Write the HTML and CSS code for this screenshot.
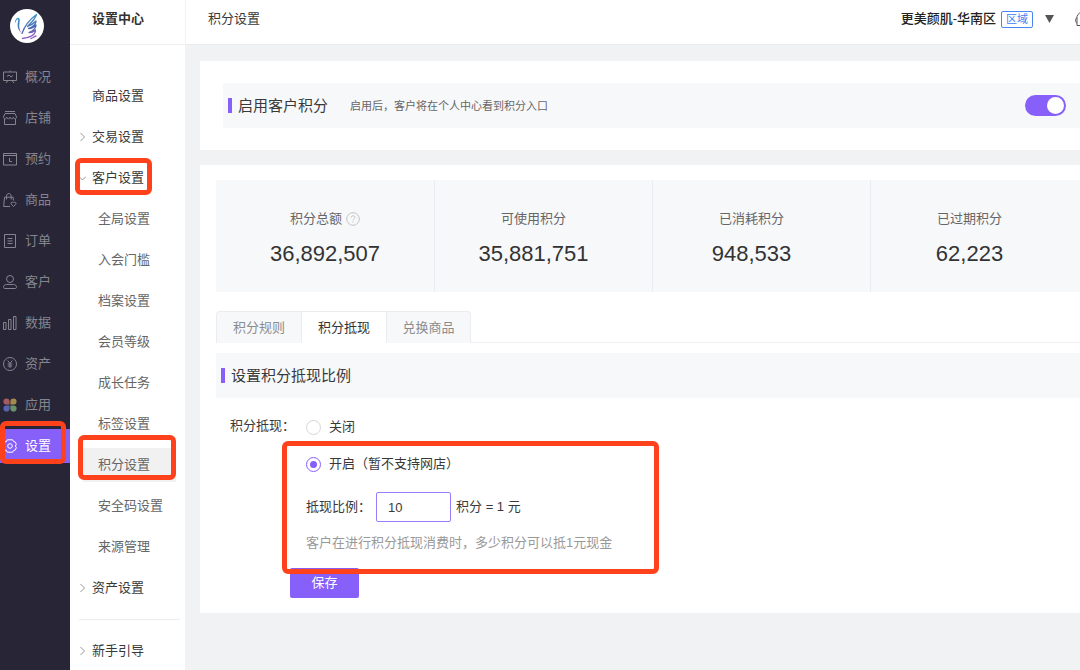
FILE: index.html
```
<!DOCTYPE html>
<html lang="zh-CN">
<head>
<meta charset="utf-8">
<title>积分设置</title>
<link rel="stylesheet" href="styles.css">
</head>
<body>
<div class="app">
  <nav class="rail" aria-label="主导航">
    <svg class="logo" viewBox="0 0 34 34" aria-hidden="true">
      <defs>
        <linearGradient id="wing" gradientUnits="userSpaceOnUse" x1="14" y1="6" x2="20" y2="30">
          <stop offset="0" stop-color="#3aa0d2"/><stop offset="0.55" stop-color="#4a69b0"/><stop offset="1" stop-color="#a05fc4"/>
        </linearGradient>
      </defs>
      <circle cx="17" cy="17" r="17" fill="#fff"/>
      <path fill="url(#wing)" d="M4.800 14.500C5 10.500 6.500 8.300 8.300 8.700c2.700.8 1 4.800.9 8.300 0 3 1 5 2.300 7C9 22 7.500 19 7.600 16c.1-3 1.200-5.500.2-5.800-1-.3-1.800 2-3 4.300z"/>
      <path fill="none" stroke="url(#wing)" stroke-linecap="round" stroke-linejoin="round" stroke-width="1.300" d="M12 24.500c2-6 7-13.500 14.500-19-1.500 5-5.500 8.500-9 12 3.500-1 6-3 8.500-5.500 0 4-3.500 6-7.500 7.500 3 .5 5-1 7.500-3.500 0 3.500-3.500 6-7 7.500 2.500.2 4.500-.6 6.500-2.500 0 4.500-5.500 7.500-13 8.500M21 29.500c2-.5 3-2 5-2.500"/>
    </svg>
    <a class="rail-item" href="#"><svg class="icon" viewBox="0 0 14 14"><path d="M.5 2h13v8.500H.5zM7 .5V2M5 10.500l-2 2.500M9 10.500l2 2.500M4 6.500l2-1.500 2 2 2-1.500"/></svg>概况</a>
    <a class="rail-item" href="#"><svg class="icon" viewBox="0 0 14 14"><path d="M2 .5h10M2 2.500h10l1.500 3.500c0 2.400-3.200 2.400-3.200 0 0 2.400-3.300 2.400-3.300 0 0 2.400-3.300 2.400-3.300 0 0 2.400-3.200 2.400-3.200 0zM1.500 8v5.500h11V8"/></svg>店铺</a>
    <a class="rail-item" href="#"><svg class="icon" viewBox="0 0 14 14"><path d="M.5 1.500h13v11.500H.5zM.5 3.500h13M6.500 6v3.500h2.500"/></svg>预约</a>
    <a class="rail-item" href="#"><svg class="icon" viewBox="0 0 14 14"><path d="M7 13.500H.7l.8-9.300h8.700l.3 3.300M3.500 6.500V3.300c0-3.700 4.700-3.700 4.700 0v3.200M10.500 13.500L8.200 11.200c-1-1.800 1.300-2.800 2.300-1.200 1-1.600 3.300-.6 2.300 1.200z"/></svg>商品</a>
    <a class="rail-item" href="#"><svg class="icon" viewBox="0 0 14 14"><path d="M1.500.5h11v13h-11zM4.500 4.500h5M4.500 7h5M4.500 9.500h5"/></svg>订单</a>
    <a class="rail-item" href="#"><svg class="icon" viewBox="0 0 14 14"><circle cx="7" cy="4" r="3.500"/><path d="M3.500 9.500h7c2 0 3 1.200 3 2.800 0 .8-.5 1.200-1.500 1.200H2c-1 0-1.500-.4-1.500-1.200 0-1.600 1-2.800 3-2.800z"/></svg>客户</a>
    <a class="rail-item" href="#"><svg class="icon" viewBox="0 0 14 14"><path d="M.5 6.500H3v7H.5zM5.500 3.500H8v10H5.500zM10.500.5H13v13h-2.500z"/></svg>数据</a>
    <a class="rail-item" href="#"><svg class="icon" viewBox="0 0 14 14"><circle cx="7" cy="7" r="6.500"/><path d="M4.700 3.500L7 6.500l2.300-3M7 6.500V11M4.700 7h4.600M4.700 9h4.600"/></svg>资产</a>
    <a class="rail-item" href="#"><svg class="icon icon-apps" viewBox="0 0 14 14"><path fill="#a55c5e" d="M6.600 6.600H3.500A3.100 3.100 0 1 1 6.600 3.500z"/><path fill="#a58a50" d="M7.400 6.600h3.100a3.100 3.100 0 1 0-3.100-3.100z"/><path fill="#5864ab" d="M6.600 7.400H3.500a3.100 3.100 0 1 0 3.100 3.100z"/><path fill="#6a9368" d="M7.400 7.400h3.100a3.100 3.100 0 1 1-3.100 3.100z"/></svg>应用</a>
    <a class="rail-item rail-active" href="#" aria-current="page"><svg class="icon" viewBox="0 0 14 14"><path d="M4.300.8h5.400l.8 1.700 1.900.6.900 2.300-1 1.600 1 1.600-.9 2.300-1.900.6-.8 1.700H4.300l-.8-1.700-1.900-.6-.9-2.300 1-1.600-1-1.600.9-2.300 1.900-.6z"/><circle cx="7" cy="7" r="2.300"/></svg>设置<span class="mark mark-rail"></span></a>
  </nav>

  <aside class="side">
    <h2 class="side-head">设置中心</h2>
    <nav class="side-list" aria-label="设置菜单">
      <a class="side-item" href="#">商品设置</a>
      <a class="side-item" href="#"><svg class="chev" viewBox="0 0 7 8"><path d="M1.500 0l4 4-4 4"/></svg>交易设置</a>
      <a class="side-item" href="#"><svg class="chev" viewBox="0 0 7 8"><path d="M0 2.500l3.500 3.500L7 2.500"/></svg>客户设置<span class="mark mark-group"></span></a>
      <a class="side-item side-sub" href="#">全局设置</a>
      <a class="side-item side-sub" href="#">入会门槛</a>
      <a class="side-item side-sub" href="#">档案设置</a>
      <a class="side-item side-sub" href="#">会员等级</a>
      <a class="side-item side-sub" href="#">成长任务</a>
      <a class="side-item side-sub" href="#">标签设置</a>
      <a class="side-item side-sub side-active" href="#">积分设置<span class="mark mark-sub"></span></a>
      <a class="side-item side-sub" href="#">安全码设置</a>
      <a class="side-item side-sub" href="#">来源管理</a>
      <a class="side-item" href="#"><svg class="chev" viewBox="0 0 7 8"><path d="M1.500 0l4 4-4 4"/></svg>资产设置</a>
      <hr class="side-rule">
      <a class="side-item" href="#"><svg class="chev" viewBox="0 0 7 8"><path d="M1.500 0l4 4-4 4"/></svg>新手引导</a>
    </nav>
  </aside>

  <div class="page">
    <header class="top">
      <h1 class="top-title">积分设置</h1>
      <div class="shop">
        <span class="shop-name">更美颜肌-华南区</span>
        <span class="badge">区域</span>
        <svg class="caret" viewBox="0 0 9 8" aria-hidden="true"><path d="M0 0h9L4.500 8z"/></svg>
        <svg class="service" viewBox="0 0 16 16" aria-hidden="true"><path d="M2 14.500V5.500C3 2.500 5.500 1 8 1s5 1.500 6 4.500v9M2 6.500C0 8 0 11 2 12M2 14.500h3M5 7h2M9 7h2"/></svg>
      </div>
    </header>

    <main class="content">
      <section class="card card-switch">
        <div class="bar">
          <h3 class="bar-title">启用客户积分</h3>
          <label class="bar-hint" for="enable">启用后，客户将在个人中心看到积分入口</label>
          <input class="switch" type="checkbox" role="switch" id="enable" checked>
        </div>
      </section>

      <section class="card card-main">
        <dl class="stats">
          <div class="stat"><dt>积分总额<svg class="help" viewBox="0 0 14 14" aria-hidden="true"><circle cx="7" cy="7" r="6.300"/><path d="M5.200 5.600c0-2.500 3.700-2.300 3.700-.2 0 1.400-1.900 1.500-1.900 3M7 9.500v1"/></svg></dt><dd>36,892,507</dd></div>
          <div class="stat"><dt>可使用积分</dt><dd>35,881,751</dd></div>
          <div class="stat"><dt>已消耗积分</dt><dd>948,533</dd></div>
          <div class="stat"><dt>已过期积分</dt><dd>62,223</dd></div>
        </dl>

        <div class="tabs" role="tablist">
          <button class="tab" type="button" role="tab" aria-selected="false">积分规则</button>
          <button class="tab tab-on" type="button" role="tab" aria-selected="true">积分抵现</button>
          <button class="tab" type="button" role="tab" aria-selected="false">兑换商品</button>
        </div>

        <div class="bar"><h3 class="bar-title">设置积分抵现比例</h3></div>

        <form class="form">
          <div class="field">
            <span class="field-label" id="mode">积分抵现：</span>
            <div class="field-body" role="radiogroup" aria-labelledby="mode">
              <label class="choice"><input class="radio" type="radio" name="mode">关闭</label>
              <div class="enabled">
                <label class="choice"><input class="radio" type="radio" name="mode" checked>开启（暂不支持网店）</label>
                <div class="ratio">
                  <label for="ratio">抵现比例：</label>
                  <input class="ratio-input" id="ratio" type="text" value="10">
                  <span>积分 = 1 元</span>
                </div>
                <p class="note">客户在进行积分抵现消费时，多少积分可以抵1元现金</p>
                <span class="mark mark-form"></span>
              </div>
            </div>
          </div>
          <button class="save" type="button">保存</button>
        </form>
      </section>
    </main>
  </div>
</div>
</body>
</html>
```
FILE: styles.css
```
* { box-sizing: border-box; }

body {
  margin: 0;
  overflow: hidden;
  background: #f1f2f4;
  color: #39393a;
  font: 13px/20px "Liberation Sans", "Noto Sans CJK SC", sans-serif;
}

h1, h2, h3, p, dl, dd { margin: 0; font-weight: 400; }
a { color: inherit; text-decoration: none; }
button, input { font: inherit; color: inherit; }

.app { display: flex; min-height: 100vh; }

/* Primary navigation */
.rail {
  flex: 0 0 70px;
  display: flex;
  flex-direction: column;
  gap: 7px;
  padding-top: 9px;
  background: #282636;
}
.logo { width: 34px; height: 34px; margin: 0 0 10px 10px; }
.rail-item {
  position: relative;
  display: flex;
  align-items: center;
  gap: 8px;
  height: 34px;
  padding-left: 3px;
  color: #85858f;
}
.rail-active { background: #8760fa; color: #fff; }
.icon { width: 14px; height: 14px; fill: none; stroke: currentColor; stroke-width: 1; }
.icon-apps { stroke: none; }

/* Settings menu */
.side { flex: 0 0 116px; background: #fff; border-right: 1px solid #f1f2f4; }
.side-head {
  height: 45px;
  padding-left: 22px;
  border-bottom: 1px solid #eeeff1;
  font-size: 13px;
  line-height: 38px;
  font-weight: 700;
  color: #333;
}
.side-list { display: flex; flex-direction: column; gap: 7px; padding: 34px 5px 0 9px; }
.side-item {
  position: relative;
  display: flex;
  align-items: center;
  height: 34px;
  padding-left: 13px;
}
.side-sub { margin: 0 4px; padding-left: 15px; color: #666; }
.side-active { background: #f1f1f1; }
.chev {
  position: absolute;
  left: 0;
  width: 7px;
  height: 8px;
  fill: none;
  stroke: #999;
  stroke-width: 1;
}
.side-rule { width: 100%; height: 1px; margin: 7px 0; border: 0; background: #ececee; }

/* Page header */
.page { flex: 1; min-width: 0; }
.top {
  display: flex;
  justify-content: space-between;
  height: 45px;
  padding-left: 22px;
  background: #fff;
  border-bottom: 1px solid #ebecee;
  line-height: 38px;
  overflow: hidden;
}
.top-title { font-size: 13px; }
.shop { display: flex; align-items: center; height: 38px; margin-right: -11px; }
.shop-name { font-weight: 500; color: #222; }
.badge {
  margin: 0 12px 0 5px;
  padding: 0 4px;
  border: 1px solid #4a86f0;
  border-radius: 2px;
  color: #3f80f2;
  font-size: 11px;
  line-height: 15px;
}
.caret { width: 9px; height: 8px; margin-right: 21px; fill: #555; }
.service { width: 16px; height: 16px; fill: none; stroke: #555; stroke-width: 1; }

/* Cards */
.content {
  display: flex;
  flex-direction: column;
  gap: 15px;
  padding: 16px 0 0 14px;
}
.card { background: #fff; }
.card-switch { padding: 22px 0 22px 23px; }
.card-main { padding: 15px 0 15px 16px; overflow: hidden; }

.bar {
  display: flex;
  align-items: center;
  height: 45px;
  padding: 0 14px 0 5px;
  background: #f7f8fa;
}
.bar-title { display: flex; align-items: center; gap: 6px; font-size: 15px; }
.bar-title::before { content: ""; width: 4px; height: 15px; background: #8760fa; }
.bar-hint { margin-left: 22px; font-size: 11px; color: #666; }

.switch {
  appearance: none;
  display: flex;
  justify-content: flex-end;
  width: 41px;
  height: 21px;
  margin: 0 0 0 auto;
  padding: 2px;
  border-radius: 11px;
  background: #8760fa;
}
.switch::before { content: ""; width: 17px; height: 17px; border-radius: 50%; background: #fff; }
.switch:not(:checked) { justify-content: flex-start; background: #ccc; }

/* Totals */
.stats {
  display: grid;
  grid-template-columns: repeat(4, 1fr);
  margin-right: -8px;
  background: #f7f8fa;
}
.stat { padding: 29px 0 23px; text-align: center; }
.stat + .stat { padding-right: 20px; border-left: 1px solid #ebecef; }
.stat dt { display: flex; justify-content: center; align-items: center; gap: 4px; color: #666; }
.stat dd { margin-top: 10px; font-size: 22px; line-height: 30px; color: #333; }
.help { width: 14px; height: 14px; fill: none; stroke: #c4c4c6; stroke-width: 1; }

/* Tabs */
.tabs {
  display: flex;
  margin: 19px 0 10px;
  box-shadow: inset 0 -1px #efeff1;
}
.tab {
  width: 85px;
  height: 32px;
  padding: 0;
  border: 1px solid #ececee;
  border-width: 1px 0 0 1px;
  background: #f7f8fa;
  color: #8c8c8e;
}
.tab:first-child { border-top-left-radius: 4px; }
.tab:last-child { border-right-width: 1px; border-top-right-radius: 4px; }
.tab-on { background: #fff; color: #333; }

/* Form */
.form { padding-top: 18px; }
.field { display: flex; gap: 11px; padding-left: 14px; }
.field-body { padding-top: 1px; }
.choice { display: flex; align-items: center; gap: 8px; }
.radio {
  appearance: none;
  display: grid;
  place-items: center;
  width: 15px;
  height: 15px;
  margin: 0;
  border: 1px solid #d5d5d8;
  border-radius: 50%;
  background: #fff;
}
.radio:checked { border-color: #8760fa; }
.radio:checked::before { content: ""; width: 7px; height: 7px; border-radius: 50%; background: #8760fa; }
.enabled { position: relative; margin-top: 17px; }
.ratio { display: flex; align-items: center; gap: 5px; margin-top: 18px; }
.ratio-input {
  width: 75px;
  height: 30px;
  padding: 0 11px;
  border: 1px solid #9a7cfa;
  border-radius: 2px;
  background: #fff;
}
.note { margin-top: 11px; color: #999; }
.save {
  display: block;
  width: 69px;
  height: 30px;
  margin: 15px 0 0 74px;
  padding: 0;
  border: 0;
  border-radius: 2px;
  background: #8760fa;
  color: #fff;
}

/* Highlight frames over the controls they point to */
.mark {
  position: absolute;
  z-index: 1;
  border: 5px solid #ff421c;
  border-radius: 6px;
  pointer-events: none;
}
.mark-rail { left: 0; top: -8px; width: 66px; height: 43px; }
.mark-group { left: -4px; top: -3px; width: 77px; height: 37px; }
.mark-sub { left: -5px; top: -13px; width: 98px; height: 45px; }
.mark-form { left: -24px; top: -13px; width: 377px; height: 133px; }
```
